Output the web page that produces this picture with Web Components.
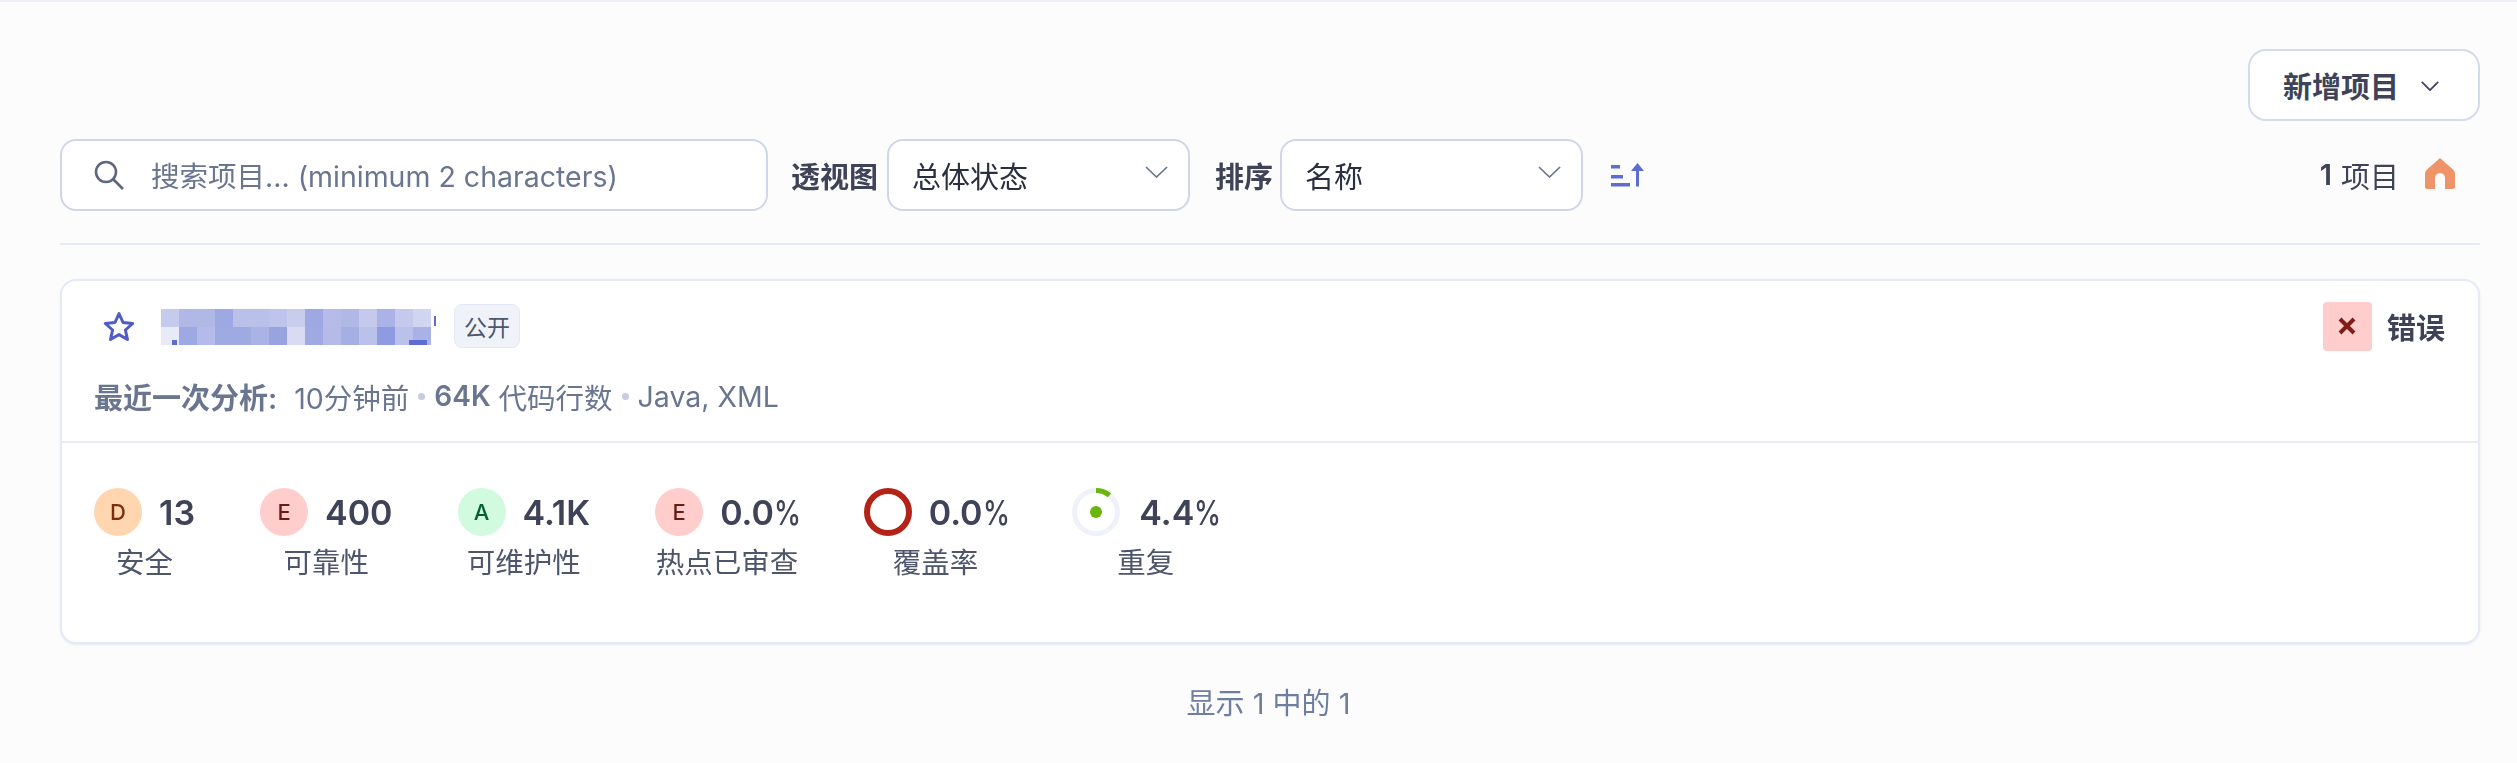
<!DOCTYPE html>
<html lang="zh"><head><meta charset="utf-8"><title>项目</title>
<style>
html,body{margin:0;padding:0;background:#fcfcfd}
body{font-family:Inter,"Noto Sans CJK SC",sans-serif;font-size:29px;color:#3e4357}
</style></head><body>
<project-page>
  <top-bar></top-bar>
  <filter-bar></filter-bar>
  <project-card></project-card>
  <page-footer>显示 1 中的 1</page-footer>
</project-page>
<script>
const def=(name,html)=>customElements.define(name,class extends HTMLElement{
  constructor(){super();this.attachShadow({mode:'open'}).innerHTML=typeof html==='function'?html(this):html;}
});
const chev=(w,h,c)=>`<svg width="${w}" height="${h}" viewBox="0 0 24 12" preserveAspectRatio="none" fill="none" stroke="${c}" stroke-width="1.7"><path d="M1 1 12 11 23 1" vector-effect="non-scaling-stroke"/></svg>`;

def('project-page',`<style>:host{display:block;box-sizing:border-box;height:763px;border-top:2px solid #eef0f8;padding:47px 37px 0 60px;filter:blur(.4px)}</style><slot></slot>`);

def('top-bar',`<style>
:host{display:flex;justify-content:flex-end;height:72px;margin-bottom:18px}
button{all:unset;box-sizing:border-box;width:232px;height:72px;background:#fff;border:2px solid #d5daec;border-radius:18px;display:flex;align-items:center;padding-left:33px;font-weight:600;color:#3e4357;font-size:29px;font-family:inherit}
svg{margin-left:22px;margin-top:2px}
</style><button>新增项目${chev(18,10,'#3e4357')}</button>`);

def('select-box',h=>`<style>
:host{display:flex;box-sizing:border-box;width:303px;height:72px;background:#fff;border:2px solid #d0d6e9;border-radius:16px;align-items:center;justify-content:space-between;padding:0 20px 0 23px;color:#2a2f40;font-size:29px}
svg{margin-top:-6px}
</style><span><slot></slot></span>${chev(23,12,'#6a7590')}`);

def('filter-bar',`<style>
:host{display:flex;align-items:center;height:71px;padding-bottom:33px;border-bottom:2px solid #e6e9f6;margin-bottom:34px}
.search{box-sizing:border-box;width:708px;height:72px;background:#fff;border:2px solid #d0d6e9;border-radius:16px;display:flex;align-items:center;padding-left:32px;color:#6a7590;font-size:28.500px;flex:none}
.search svg{margin-right:27px;flex:none}
b{font-weight:600;color:#3e4357;font-size:29px;white-space:nowrap}
.l1{margin:0 9px 0 23px}.l2{margin:0 7px 0 25px}
.sort{margin-left:28px;display:block}
.count{margin-left:auto;display:flex;align-items:center;color:#3e4357;font-size:29px}
.count b{margin-right:9px}
.count svg{margin:-3px 25px 0 26px}
</style>
<div class="search"><svg width="30" height="30" viewBox="0 0 30 30" fill="none" stroke="#5c6780" stroke-width="2.6"><circle cx="12" cy="12" r="10"/><path d="M19.5 19.5 29 29"/></svg><span>搜索项目... (minimum 2 characters)</span></div>
<b class="l1">透视图</b><select-box>总体状态</select-box>
<b class="l2">排序</b><select-box>名称</select-box>
<svg class="sort" width="34" height="24" viewBox="0 0 34 24" fill="#5d6cd0"><rect x="0" y="2" width="9" height="3.500"/><rect x="0" y="12" width="12" height="3.500"/><rect x="0" y="20" width="19" height="3.500"/><path d="M25 23.500h3V8h5L26.5 0 20 8h5z"/></svg>
<div class="count"><b>1</b>项目<svg width="30" height="31" viewBox="0 0 30 31" fill="#ee9468"><path d="M15 0 28.500 12Q30 13.500 30 16V29a2 2 0 0 1-2 2H20V20a5 5 0 0 0-10 0V31H2a2 2 0 0 1-2-2V16Q0 13.500 1.500 12z"/></svg></div>`);

const rows=[['c5cbec','b0b8e6','b0b8e6','9ea8e2','b9c0ea','b9c0ea','bec4eb','c8cdee','9ea8e2','b5bce8','b0b8e6','c5caed','abb3e6','c5caed','d0d5f0'],
['e8eaf8','9ea8e2','b4bbe8','9fa9e2','9fa9e2','abb3e6','98a3e0','d8dcf2','9fa9e2','b4bbe8','a6afe4','bac1ea','8f9be0','bac1ea','a9b2e6']];
def('mosaic-name',`<style>
:host{display:grid;position:relative;grid-template-columns:repeat(15,18px);grid-template-rows:18px 18px;width:270px;height:36px;margin-top:2px}
i{display:block}
.a,.b,.c{position:absolute;background:#5d6cd0}
.a{left:11px;bottom:0;width:5px;height:5px}.b{left:248px;bottom:0;width:18px;height:5px}.c{left:273px;top:7px;width:2px;height:10px}
</style>${rows.flat().map(c=>`<i style="background:#${c}"></i>`).join('')}<span class="a"></span><span class="b"></span><span class="c"></span>`);

def('rating-badge',h=>{const r=h.getAttribute('r'),m={D:['#ffd6af','#7a2e0e'],E:['#ffcdcb','#6b1a14'],A:['#d1fadf','#05603a']}[r];
return `<style>:host{display:flex;width:48px;height:48px;flex:none;border-radius:50%;background:${m[0]};color:${m[1]};align-items:center;justify-content:center;font-size:22px;font-weight:500}</style>${r}`});

def('metric-item',h=>`<style>
:host{display:flex;flex-direction:column;align-items:center}
.t{display:flex;align-items:center;height:48px}
.v{font-size:34px;font-weight:600;color:#3e4357;margin-left:var(--g,17px);white-space:nowrap}
.v small{display:inline-block;font-size:34px;font-weight:500;transform:scaleX(.8);transform-origin:left;margin-right:-9px}
.l{font-size:28.500px;line-height:38px;color:#4e566c;margin-top:8px;white-space:nowrap}
</style><div class="t"><slot name="i"></slot><span class="v">${h.getAttribute('v').replace('%','<small>%</small>')}</span></div><div class="l">${h.getAttribute('l')}</div>`);

def('project-card',`<style>
:host{display:block;box-sizing:border-box;height:365px;background:#fff;border:2px solid #e6e9f6;border-radius:16px;box-shadow:0 1px 2px rgba(90,100,160,.12)}
.top{height:162px;box-sizing:border-box;padding:23px 32px 0;border-bottom:2px solid #e9ecf6}
.r1{display:flex;align-items:center;height:44px}
.star{margin:0 26px 0 9px;flex:none}
.pub{box-sizing:border-box;height:44px;width:66px;margin-left:23px;background:#eff2f9;border:1px solid #e4e8f4;border-radius:8px;font-size:23px;color:#4e566c;display:flex;align-items:center;justify-content:center}
.st{margin-left:auto;display:flex;align-items:center;font-weight:600;margin-right:1px}
.tile{width:49px;height:49px;background:#ffcdcb;border-radius:4px;margin-right:15px;display:flex;align-items:center;justify-content:center}
.m{display:flex;align-items:center;margin-top:31px;font-size:28.500px;color:#6a7590;white-space:nowrap;height:34px}
.m b{font-weight:600}
.m .h{font-size:29px;margin-right:17px}
.d{width:7px;height:7px;border-radius:50%;background:#c5cdde;margin:0 9px}
.k{margin-right:8px;font-size:28px}
.bot{display:flex;gap:65px;padding:45px 32px 0}
</style>
<div class="top">
 <div class="r1">
  <svg class="star" width="32" height="30" viewBox="0 0 32 30" fill="none" stroke="#4f5cc4" stroke-width="3" stroke-linejoin="round"><path d="M16 2.5l4 9 9.7 1-7.3 6.5 2.1 9.5-8.500-4.900-8.500 4.900 2.100-9.500-7.300-6.500 9.700-1z"/></svg>
  <mosaic-name></mosaic-name><span class="pub">公开</span>
  <div class="st"><span class="tile"><svg width="20" height="20" viewBox="0 0 20 20" stroke="#7f1d16" stroke-width="4"><path d="M3 3 17 17M17 3 3 17"/></svg></span>错误</div>
 </div>
 <div class="m"><b class="h">最近一次分析:</b>10分钟前<span class="d"></span><b class="k">64K</b>代码行数<span class="d"></span>Java, XML</div>
</div>
<div class="bot">
 <metric-item v="13" l="安全"><rating-badge slot="i" r="D"></rating-badge></metric-item>
 <metric-item v="400" l="可靠性"><rating-badge slot="i" r="E"></rating-badge></metric-item>
 <metric-item v="4.1K" l="可维护性"><rating-badge slot="i" r="A"></rating-badge></metric-item>
 <metric-item v="0.0%" l="热点已审查"><rating-badge slot="i" r="E"></rating-badge></metric-item>
 <metric-item v="0.0%" l="覆盖率"><svg slot="i" width="48" height="48" viewBox="0 0 48 48" fill="none" stroke="#b42318" stroke-width="6"><circle cx="24" cy="24" r="21"/></svg></metric-item>
 <metric-item v="4.4%" l="重复" style="--g:19px"><svg slot="i" width="48" height="48" viewBox="0 0 48 48" fill="none" stroke-width="5"><circle cx="24" cy="24" r="21.500" stroke="#eff2f9"/><path d="M24 2.500A21.500 21.500 0 0 1 37.500 7.300" stroke="#6cb60c"/><circle cx="24" cy="24" r="6" fill="#6cb60c"/></svg></metric-item>
</div>`);

def('page-footer',`<style>:host{display:block;text-align:center;margin-top:41px;padding-right:3px;color:#6e7ea0;font-size:29px;line-height:38px}</style><slot></slot>`);
</script>
</body></html>
